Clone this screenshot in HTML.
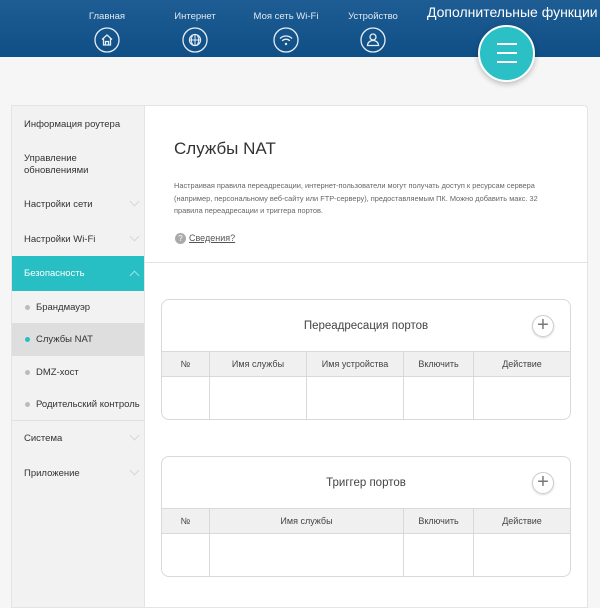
<!DOCTYPE html>
<html><head><meta charset="utf-8"><style>
*{margin:0;padding:0;box-sizing:border-box}
body{width:600px;height:608px;overflow:hidden;background:#f6f6f6;font-family:"Liberation Sans",sans-serif;position:relative;color:#333}
.hdr{position:absolute;left:0;top:0;width:600px;height:57px;background:linear-gradient(#1e5d93,#0f4f86);}
.nav{position:absolute;top:11px;width:80px;text-align:center;color:#dfe8f2;font-size:9.5px}
.nav svg{display:block;margin:5px auto 0}
.more{position:absolute;left:427px;top:4px;color:#fff;font-size:14px}
.fab{position:absolute;left:478px;top:25px;width:57px;height:57px;border-radius:50%;background:#2bc0c5;border:2px solid #fff;box-shadow:0 2px 6px rgba(0,0,0,.25)}
.fab i{position:absolute;left:17px;width:20px;height:2px;background:#fff}
.side{position:absolute;left:11px;top:105px;width:133px;height:503px;background:#f2f2f2;border:1px solid #e4e4e4;border-right:none}
.it{position:absolute;left:12px;font-size:9.5px;color:#333;line-height:12px}
.chev{position:absolute;left:119px;width:7px;height:7px;border-right:1px solid #d6d6d6;border-bottom:1px solid #d6d6d6;transform:rotate(45deg)}
.dot{position:absolute;left:13px;width:5px;height:5px;border-radius:50%;background:#bbb}
.main{position:absolute;left:144px;top:105px;width:444px;height:503px;background:#fff;border:1px solid #e4e4e4;border-radius:0 4px 0 0}
.tbl{position:absolute;left:161px;width:410px;border:1px solid #d9d9d9;border-radius:8px;background:#fff;overflow:hidden}
.tt{height:52px;text-align:center;line-height:52px;font-size:11.5px;color:#444;position:relative;border-bottom:1px solid #d9d9d9}
.plus{position:absolute;right:16px;top:15px;width:22px;height:22px;border-radius:50%;border:1px solid #ccc;box-shadow:0 1px 2px rgba(0,0,0,.15);line-height:19px;font-size:20px;color:#777;text-align:center}
.row{display:flex;height:25px;background:#f0f0f0;border-bottom:1px solid #d9d9d9;font-size:9px;color:#444}
.row div,.body div{border-right:1px solid #d9d9d9;text-align:center;line-height:25px}
.row div:last-child,.body div:last-child{border-right:none}
.body{display:flex;height:42px}
</style></head><body>
<div class="hdr"></div>
<div class="nav" style="left:67px">Главная<svg width="26" height="26" viewBox="0 0 26 26"><circle cx="13" cy="13" r="12" fill="none" stroke="#e6eef6" stroke-width="1.3"/><path d="M8 12.5L13 8l5 4.5M9.5 11.5V18h7v-6.5M11.5 18v-3.5h3V18" fill="none" stroke="#e6eef6" stroke-width="1.3"/></svg></div>
<div class="nav" style="left:155px">Интернет<svg width="26" height="26" viewBox="0 0 26 26"><circle cx="13" cy="13" r="12" fill="none" stroke="#e6eef6" stroke-width="1.3"/><circle cx="13" cy="13" r="5.5" fill="none" stroke="#e6eef6" stroke-width="1.3"/><path d="M7.5 13h11M13 7.5v11M10.5 8.5c-1.5 3-1.5 6 0 9M15.5 8.5c1.5 3 1.5 6 0 9" fill="none" stroke="#e6eef6" stroke-width="1"/></svg></div>
<div class="nav" style="left:246px">Моя сеть Wi-Fi<svg width="26" height="26" viewBox="0 0 26 26"><circle cx="13" cy="13" r="12" fill="none" stroke="#e6eef6" stroke-width="1.3"/><path d="M7 11.5a8.5 8.5 0 0 1 12 0M9.2 13.8a5.3 5.3 0 0 1 7.6 0" fill="none" stroke="#e6eef6" stroke-width="1.3"/><circle cx="13" cy="17" r="1.2" fill="#e6eef6"/></svg></div>
<div class="nav" style="left:333px">Устройство<svg width="26" height="26" viewBox="0 0 26 26"><circle cx="13" cy="13" r="12" fill="none" stroke="#e6eef6" stroke-width="1.3"/><circle cx="13" cy="10" r="3" fill="none" stroke="#e6eef6" stroke-width="1.3"/><path d="M7.5 18.5c0-3 2.5-5 5.5-5s5.5 2 5.5 5z" fill="none" stroke="#e6eef6" stroke-width="1.3"/></svg></div>
<div class="more">Дополнительные функции</div>
<div class="fab"><i style="top:16px"></i><i style="top:25px"></i><i style="top:34px"></i></div>

<div class="side">
<div class="it" style="top:13px">Информация роутера</div>
<div class="it" style="top:47px">Управление<br>обновлениями</div>
<div class="it" style="top:93px">Настройки сети</div><div class="chev" style="top:92px"></div>
<div class="it" style="top:128px">Настройки Wi-Fi</div><div class="chev" style="top:127px"></div>
<div style="position:absolute;left:0;top:150px;width:133px;height:35px;background:#27bfc4"></div>
<div class="it" style="top:162px;color:#fff">Безопасность</div>
<div style="position:absolute;left:119px;top:166px;width:7px;height:7px;border-left:1px solid #9fe3e5;border-top:1px solid #9fe3e5;transform:rotate(45deg)"></div>
<div class="dot" style="top:199px"></div><div class="it" style="top:196px;left:24px">Брандмауэр</div>
<div style="position:absolute;left:0;top:217px;width:133px;height:33px;background:#dedede"></div>
<div class="dot" style="top:231px;background:#27bfc4"></div><div class="it" style="top:228px;left:24px">Службы NAT</div>
<div class="dot" style="top:264px"></div><div class="it" style="top:261px;left:24px">DMZ-хост</div>
<div class="dot" style="top:296px"></div><div class="it" style="top:293px;left:24px">Родительский контроль</div>
<div style="position:absolute;left:0;top:314px;width:133px;height:1px;background:#e0e0e0"></div>
<div class="it" style="top:327px">Система</div><div class="chev" style="top:326px"></div>
<div class="it" style="top:362px">Приложение</div><div class="chev" style="top:361px"></div>
</div>

<div class="main">
<div style="position:absolute;left:29px;top:33px;font-size:17px;color:#333">Службы NAT</div>
<div style="position:absolute;left:29px;top:74px;width:385px;font-size:7.4px;line-height:12.5px;color:#666">Настраивая правила переадресации, интернет-пользователи могут получать доступ к ресурсам сервера (например, персональному веб-сайту или FTP-серверу), предоставляемым ПК. Можно добавить макс. 32 правила переадресации и триггера портов.</div>
<div style="position:absolute;left:30px;top:127px;width:11px;height:11px;border-radius:50%;background:#aaa;color:#fff;font-size:8px;text-align:center;line-height:11px">?</div>
<div style="position:absolute;left:44px;top:127px;font-size:9px;color:#555;text-decoration:underline">Сведения?</div>
<div style="position:absolute;left:0;top:156px;width:442px;height:1px;background:#e2e2e2"></div>
</div>

<div class="tbl" style="top:299px">
<div class="tt">Переадресация портов<div class="plus">+</div></div>
<div class="row"><div style="width:48px">№</div><div style="width:97px">Имя службы</div><div style="width:97px">Имя устройства</div><div style="width:70px">Включить</div><div style="flex:1">Действие</div></div>
<div class="body"><div style="width:48px"></div><div style="width:97px"></div><div style="width:97px"></div><div style="width:70px"></div><div style="flex:1"></div></div>
</div>
<div class="tbl" style="top:456px">
<div class="tt">Триггер портов<div class="plus">+</div></div>
<div class="row"><div style="width:48px">№</div><div style="width:194px">Имя службы</div><div style="width:70px">Включить</div><div style="flex:1">Действие</div></div>
<div class="body"><div style="width:48px"></div><div style="width:194px"></div><div style="width:70px"></div><div style="flex:1"></div></div>
</div>
</body></html>
